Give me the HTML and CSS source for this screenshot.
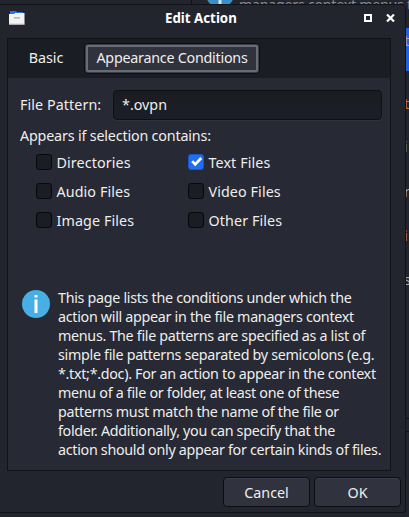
FILE: index.html
```
<!DOCTYPE html>
<html lang="en">
<head>
<meta charset="utf-8">
<title>Edit Action</title>
<link rel="stylesheet" href="styles.css">
</head>
<body>
<div class="desktop" aria-hidden="true">
  <svg class="bg-info" width="28" height="5" viewBox="0 0 28 5"><circle cx="14" cy="-6" r="14" fill="#3b8fc6"/><path d="M12.500 0h3v4h-3z" fill="#d5e2ea"/></svg>
  <span class="bg-text">managers context menus t</span>
  <i class="bg-line"></i>
  <i class="bg-select"></i>
  <span class="bg-char c0">t</span>
  <span class="bg-char c1 warm">t</span>
  <span class="bg-char c2 cool">i</span>
  <span class="bg-char c3">n</span>
  <span class="bg-char c4 warm">i</span>
  <span class="bg-char c5">s</span>
  <i class="bg-bar"></i>
</div>
<main class="window">
  <header class="titlebar">
    <svg class="app-icon" width="16" height="14" viewBox="0 0 16 14"><path d="M1 0h6l1 1h6v5H1z" fill="#2f6fe0"/><path d="M0 3h5l1-1h9.500v11.500H0z" fill="#f3f3f3"/><path d="M0 12.500h15.500v1H0z" fill="#cfcfcf"/><rect x="5" y="6" width="6" height="1.700" fill="#b9b9b9"/></svg>
    <h1>Edit Action</h1>
    <svg class="controls" width="31" height="8" viewBox="0 0 31 8"><path d="M1 1h6v6H1z" fill="none" stroke="#fff" stroke-width="2"/><path d="M23 .5l7 7M30 .5l-7 7" stroke="#fff" stroke-width="2.200"/></svg>
  </header>
  <section class="notebook">
    <nav class="tabs"><span class="tab">Basic</span><span class="tab active">Appearance Conditions</span></nav>
    <div class="page">
      <div class="pattern"><label>File Pattern:</label><div class="entry">*.ovpn</div></div>
      <p class="caption">Appears if selection contains:</p>
      <div class="checks">
        <label><i class="box"></i>Directories</label>
        <label><i class="box checked"><svg width="14" height="14" viewBox="0 0 14 14"><path d="M3.200 6.200l3 3.200 6-6.400" fill="none" stroke="#fff" stroke-width="2.700"/></svg></i>Text Files</label>
        <label><i class="box"></i>Audio Files</label>
        <label><i class="box"></i>Video Files</label>
        <label><i class="box"></i>Image Files</label>
        <label><i class="box"></i>Other Files</label>
      </div>
      <div class="info">
        <svg width="28" height="28" viewBox="0 0 28 28"><circle cx="14" cy="14" r="14" fill="#48aee6"/><path d="M12.500 5h3v2.500h-3zM12.500 9.500h3V23h-3z" fill="#fff"/></svg>
        <p>This page lists the conditions under which the<br>action will appear in the file managers context<br>menus. The file patterns are specified as a list of<br>simple file patterns separated by semicolons (e.g.<br>*.txt;*.doc). For an action to appear in the context<br>menu of a file or folder, at least one of these<br>patterns must match the name of the file or<br>folder. Additionally, you can specify that the<br>action should only appear for certain kinds of files.</p>
      </div>
    </div>
  </section>
  <footer><button>Cancel</button><button>OK</button></footer>
</main>
</body>
</html>
```
FILE: styles.css
```
* { box-sizing: border-box; }
body {
  margin: 0;
  width: 409px;
  height: 517px;
  overflow: hidden;
  position: relative;
  background: #22242e;
  color: #eeeeec;
  font: 14.3px/19px "Noto Sans", sans-serif;
  padding-top: 4px;
}
h1, p { margin: 0; font: inherit; }
.desktop { position: absolute; inset: 0; overflow: hidden; }
.bg-info { position: absolute; left: 206px; top: 0; }
.bg-text { position: absolute; left: 239px; top: -5px; color: #898b90; white-space: nowrap; letter-spacing: -.3px; }
.bg-line { position: absolute; left: 191px; top: 0; width: 1px; height: 5px; background: #101218; }
.bg-select { position: absolute; left: 405px; top: 28px; width: 4px; height: 43px; background: #1f61e3; }
.bg-char { position: absolute; left: 404px; color: #a9a9a9; }
.warm { color: #b77d49; }
.cool { color: #5797bc; }
.c0 { top: 31px; }
.c1 { top: 94px; }
.c2 { top: 137px; }
.c3 { top: 182px; }
.c4 { top: 226px; }
.c5 { top: 270px; }
.bg-bar { position: absolute; left: 405px; top: 418px; width: 4px; height: 14px; border: solid #101218; border-width: 1px 0; }
.window {
  position: relative;
  display: flex;
  flex-direction: column;
  width: 406px;
  height: 509px;
  padding: 0 4px 5px 7px;
  background: #23252e;
  border: solid #101218;
  border-width: 1px 1px 1px 0;
  border-radius: 0 5px 3px 0;
}
.titlebar { display: flex; align-items: center; height: 33px; }
.app-icon { margin: -6px 0 0 2px; }
.titlebar h1 {
  flex: 1;
  margin: -6px 0 0 140px;
  font-size: 13.3px;
  font-weight: 700;
  color: #fff;
  white-space: nowrap;
}
.controls { margin: -6px 6px 0 0; }
.notebook { width: 384px; height: 434px; border: 1px solid #101218; background: #272934; }
.tabs { display: flex; height: 39px; padding: 4px 0 0; background: #1b1d24; }
.tab { display: flex; justify-content: center; align-items: center; width: 76px; height: 31px; padding-bottom: 1px; white-space: nowrap; }
.tab.active {
  width: 176px;
  letter-spacing: -.24px;
  background: #30333e;
  border: 1px solid #0c0d12;
  border-radius: 4px;
  box-shadow: inset 0 0 0 1px #3c3f4a, inset 0 0 0 3px #6a6c75;
}
.page { padding: 12px 8px 0 12px; }
.pattern { display: flex; align-items: center; height: 30px; }
.pattern label { width: 93px; letter-spacing: .08px; }
.entry {
  flex: 1;
  height: 30px;
  padding: 4px 8px;
  background: linear-gradient(#1b1c20, #1b1e26 70%);
  border: 1px solid #0e1015;
  border-radius: 4px;
  box-shadow: 0 1px #30323c;
}
.caption { margin-top: 6px; letter-spacing: -.17px; }
.checks { display: grid; grid-template-columns: 152px 152px; grid-auto-rows: 29px; margin: 3px 0 0 16px; }
.checks label { display: flex; align-items: center; gap: 4.5px; letter-spacing: .1px; }
.box { width: 16px; height: 16px; background: #1b1d24; border: 1px solid #08090c; border-radius: 3px; }
.box svg { display: block; }
.checked { background: #216ff0; border-color: #1558cb; }
.info { display: flex; gap: 8px; margin: 53px 0 0 2px; }
.info svg { flex: none; margin-top: 2px; }
.info p { white-space: nowrap; letter-spacing: -.3px; }
footer { display: flex; justify-content: flex-end; gap: 4px; margin-top: 6px; }
button {
  width: 87px;
  height: 30px;
  padding: 0;
  border: 1px solid #0c0d12;
  border-radius: 4px;
  background: #30333e;
  box-shadow: inset 0 1px #3b3e49;
  color: inherit;
  font: inherit;
}
```
